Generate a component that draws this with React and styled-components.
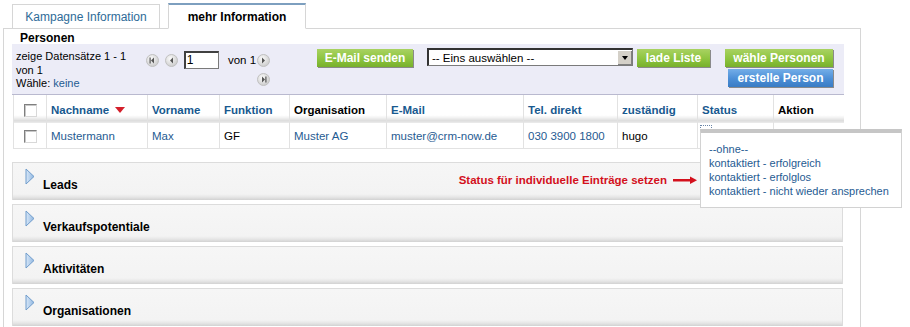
import React from "react";
import styled, { createGlobalStyle } from "styled-components";

const GlobalStyle = createGlobalStyle`
  body {
    margin: 0;
    background: #fff;
    font-family: "Liberation Sans", Arial, sans-serif;
    font-size: 11px;
    color: #000;
  }
`;

const LINK = "#1f5b92";

const Page = styled.div`
  width: 910px;
  height: 327px;
  overflow: hidden;
  padding-top: 3px;
  box-sizing: border-box;
`;

const TabBar = styled.div`
  display: flex;
  align-items: flex-end;
  gap: 8px;
  margin-left: 12px;
  height: 25px;
  position: relative;
  z-index: 1;
`;

const Tab = styled.div`
  box-sizing: border-box;
  width: ${(p) => (p.$active ? "138px" : "148px")};
  height: ${(p) => (p.$active ? "26px" : "24px")};
  margin-bottom: ${(p) => (p.$active ? "-1px" : "0")};
  display: flex;
  align-items: center;
  justify-content: center;
  background: #fff;
  border: 1px solid #d6d6d6;
  border-bottom: ${(p) => (p.$active ? "1px solid #fff" : "none")};
  border-top: ${(p) => (p.$active ? "2px solid #7d9fbf" : "1px solid #d6d6d6")};
  color: ${(p) => (p.$active ? "#000" : "#2e6b98")};
  font-weight: ${(p) => (p.$active ? "bold" : "normal")};
  font-size: 12px;
`;

const Panel = styled.div`
  margin-left: 3px;
  width: 858px;
  box-sizing: border-box;
  border: 1px solid #d6d6d6;
  border-bottom: none;
  padding: 0 16px 40px 8px;
  position: relative;
`;

const Heading = styled.div`
  font-weight: bold;
  font-size: 12px;
  padding: 3px 0 0 8px;
  height: 12px;
  line-height: 12px;
`;

const Toolbar = styled.div`
  display: flex;
  align-items: flex-start;
  background: #ececf7;
  border-bottom: 1px solid #b9b9cf;
  padding: 4px 10px 0 4px;
  box-sizing: border-box;
  height: 51px;
`;

const Info = styled.div`
  width: 130px;
  line-height: 13.5px;
  margin-top: 2px;
`;

const Link = styled.span`
  color: ${LINK};
`;

const Pager = styled.div`
  width: 124px;
  display: flex;
  flex-direction: column;
  align-items: flex-end;
  gap: 4px;
  margin-top: 3px;
`;

const PagerRow = styled.div`
  display: flex;
  align-items: center;
  width: 100%;
`;

const PageInput = styled.div`
  width: 36px;
  height: 18px;
  box-sizing: border-box;
  border: 1px solid #7a7a7a;
  border-top: 2px solid #404040;
  border-left: 2px solid #404040;
  background: #fff;
  font-size: 12px;
  line-height: 15px;
  padding-left: 1px;
  margin: 0 9px 0 6px;
`;

const PagerText = styled.span`
  font-size: 11.5px;
  width: 30px;
`;

const Spacer = styled.span`
  width: 6px;
`;

const CircleIcon = ({ dir, end }) => (
  <svg width="13" height="13" viewBox="0 0 13 13" style={{ flex: "none" }}>
    <defs>
      <radialGradient id="cg" cx="40%" cy="35%" r="70%">
        <stop offset="0" stopColor="#fbfbfb" />
        <stop offset="1" stopColor="#c9c9c9" />
      </radialGradient>
    </defs>
    <circle cx="6.5" cy="6.5" r="6" fill="url(#cg)" stroke="#c0c0c0" />
    {dir === "left" ? (
      <>
        <polygon points="8,3.5 8,9.5 5,6.5" fill="#555" />
        {end && <rect x="3.5" y="3.5" width="1.2" height="6" fill="#555" />}
      </>
    ) : (
      <>
        <polygon points="5,3.5 5,9.5 8,6.5" fill="#555" />
        {end && <rect x="8.3" y="3.5" width="1.2" height="6" fill="#555" />}
      </>
    )}
  </svg>
);

const Button = styled.div`
  box-sizing: border-box;
  height: 18px;
  width: ${(p) => p.$w}px;
  margin-left: ${(p) => p.$ml || 0}px;
  margin-top: ${(p) => (p.$mt === undefined ? 1 : p.$mt)}px;
  display: flex;
  align-items: center;
  justify-content: center;
  color: #fff;
  font-weight: bold;
  font-size: 12px;
  flex: none;
  background: ${(p) =>
    p.$blue
      ? "linear-gradient(to bottom, #74aee8 0%, #4b8ed6 55%, #3a7cc4 100%)"
      : "linear-gradient(to bottom, #a9d262 0%, #8dc43f 55%, #78b02c 100%)"};
  box-shadow: 1px 1px 0 #8a8a8a;
`;

const Select = styled.div`
  box-sizing: border-box;
  width: 206px;
  height: 18px;
  margin-left: 14px;
  border: 1px solid #7a7a7a;
  border-top: 2px solid #333;
  border-left: 2px solid #333;
  background: #fff;
  display: flex;
  align-items: center;
  justify-content: space-between;
  font-size: 11.5px;
  padding-left: 3px;
  flex: none;
`;

const SelectArrow = styled.div`
  width: 14px;
  height: 14px;
  background: #d4d0c8;
  border-left: 1px solid #fff;
  box-shadow: inset -1px -1px 0 #808080;
  display: flex;
  align-items: center;
  justify-content: center;
  &::after {
    content: "";
    border-left: 3.5px solid transparent;
    border-right: 3.5px solid transparent;
    border-top: 4px solid #000;
  }
`;

const ButtonStack = styled.div`
  display: flex;
  flex-direction: column;
  align-items: flex-end;
  gap: 2px;
  margin-left: 15px;
  width: 108px;
`;

const Table = styled.table`
  border-collapse: collapse;
  width: 830px;
  margin-left: 1px;
  table-layout: fixed;
  border-left: 1px solid #e2e2e2;
`;

const Th = styled.th`
  height: 28px;
  padding: 2px 0 0 4px;
  text-align: left;
  font-size: 11.5px;
  font-weight: bold;
  color: ${(p) => (p.$plain ? "#000" : "#18598f")};
  border-left: 1px solid #e2e2e2;
  background: linear-gradient(to bottom, #fff 0%, #fff 72%, #f0f0f0 82%, #dcdcdc 92%, #ededed 100%);
  box-sizing: border-box;
  vertical-align: middle;
`;

const Td = styled.td`
  height: 24px;
  padding: 1px 0 0 4px;
  color: ${(p) => (p.$plain ? "#000" : LINK)};
  border-left: 1px solid #e2e2e2;
  border-bottom: 1px solid #e2e2e2;
  position: relative;
  font-size: 11.5px;
`;

const CheckCell = styled.div`
  display: flex;
  justify-content: center;
  margin-left: -4px;
`;

const Checkbox = styled.div`
  width: 13px;
  height: 13px;
  box-sizing: border-box;
  border: 1px solid #7f7f7f;
  border-right-color: #d8d8d8;
  border-bottom-color: #d8d8d8;
  background: #fff;
  box-shadow: inset 1px 1px 0 #c8c8c8;
`;

const SortArrow = styled.span`
  display: inline-block;
  margin-left: 6px;
  vertical-align: 1px;
  border-left: 5px solid transparent;
  border-right: 5px solid transparent;
  border-top: 6px solid #d41f2a;
`;

const FocusMark = styled.div`
  position: absolute;
  left: 2px;
  top: 2px;
  width: 10px;
  height: 3px;
  border: 1px dotted #6a86a8;
`;

const Popup = styled.div`
  position: absolute;
  left: 2px;
  top: 6px;
  width: 202px;
  height: 79px;
  box-sizing: border-box;
  background: #fff;
  border: 1px solid #d2d2d2;
  border-top: 4px solid #c6c6c6;
  padding: 9px 0 0 8px;
  z-index: 5;
`;

const PopupItem = styled.div`
  color: ${LINK};
  font-size: 11px;
  line-height: 14px;
  white-space: nowrap;
`;

const Blocks = styled.div`
  display: flex;
  flex-direction: column;
  gap: 4px;
  margin-top: 13px;
`;

const Block = styled.div`
  box-sizing: border-box;
  height: 38px;
  width: 831px;
  border: 1px solid #dcdcdc;
  border-bottom: none;
  background: linear-gradient(to bottom, #f6f6f6 0%, #f3f3f3 84%, #e6e6e6 92%, #d2d2d2 100%);
  display: flex;
  align-items: flex-start;
  padding-left: 12px;
`;

const BlockIcon = styled.svg`
  margin-top: 5px;
  flex: none;
`;

const BlockTitle = styled.div`
  font-weight: bold;
  font-size: 12px;
  margin: 15px 0 0 8px;
`;

const Note = styled.div`
  margin-left: auto;
  margin-right: 145px;
  margin-top: 11px;
  display: flex;
  align-items: center;
  gap: 6px;
  color: #d3101c;
  font-weight: bold;
  font-size: 11.5px;
`;

const Triangle = () => (
  <BlockIcon width="10" height="17" viewBox="0 0 10 17">
    <defs>
      <linearGradient id="tg" x1="0" x2="1" y1="0" y2="0">
        <stop offset="0" stopColor="#d9e8f8" />
        <stop offset="1" stopColor="#8fb6e0" />
      </linearGradient>
    </defs>
    <polygon points="1,1 9,8.5 1,16" fill="url(#tg)" stroke="#6f9ccc" strokeWidth="1" />
  </BlockIcon>
);

const RedArrow = () => (
  <svg width="24" height="8" viewBox="0 0 24 8">
    <rect x="0" y="3" width="18" height="2.5" fill="#d3101c" />
    <polygon points="17,0.5 24,4.2 17,8" fill="#d3101c" />
  </svg>
);

const columns = [
  { w: 33 },
  { w: 101, label: "Nachname", sort: true },
  { w: 72, label: "Vorname" },
  { w: 70, label: "Funktion" },
  { w: 97, label: "Organisation", plain: true },
  { w: 137, label: "E-Mail" },
  { w: 94, label: "Tel. direkt" },
  { w: 80, label: "zuständig" },
  { w: 76, label: "Status" },
  { w: 70, label: "Aktion", plain: true },
];

const statusOptions = [
  "--ohne--",
  "kontaktiert - erfolgreich",
  "kontaktiert - erfolglos",
  "kontaktiert - nicht wieder ansprechen",
];

const blocks = ["Leads", "Verkaufspotentiale", "Aktivitäten", "Organisationen"];

export default function App() {
  return (
    <Page>
      <GlobalStyle />
      <TabBar>
        <Tab>Kampagne Information</Tab>
        <Tab $active>mehr Information</Tab>
      </TabBar>
      <Panel>
        <Heading>Personen</Heading>
        <Toolbar>
          <Info>
            zeige Datensätze 1 - 1
            <br />
            von 1
            <br />
            Wähle: <Link>keine</Link>
          </Info>
          <Pager>
            <PagerRow>
              <CircleIcon dir="left" end />
              <Spacer />
              <CircleIcon dir="left" />
              <PageInput>1</PageInput>
              <PagerText>von 1</PagerText>
              <CircleIcon dir="right" />
            </PagerRow>
            <CircleIcon dir="right" end />
          </Pager>
          <Button $w={96} $ml={47}>
            E-Mail senden
          </Button>
          <Select>
            -- Eins auswählen --
            <SelectArrow />
          </Select>
          <Button $w={73} $ml={4}>
            lade Liste
          </Button>
          <ButtonStack>
            <Button $w={108} $mt={1}>
              wähle Personen
            </Button>
            <Button $w={105} $mt={0} $blue>
              erstelle Person
            </Button>
          </ButtonStack>
        </Toolbar>
        <Table>
          <colgroup>
            {columns.map((c, i) => (
              <col key={i} style={{ width: c.w }} />
            ))}
          </colgroup>
          <thead>
            <tr>
              {columns.map((c, i) =>
                i === 0 ? (
                  <Th key={i}>
                    <CheckCell>
                      <Checkbox />
                    </CheckCell>
                  </Th>
                ) : (
                  <Th key={i} $plain={c.plain}>
                    {c.label}
                    {c.sort && <SortArrow />}
                  </Th>
                )
              )}
            </tr>
          </thead>
          <tbody>
            <tr>
              <Td>
                <CheckCell>
                  <Checkbox />
                </CheckCell>
              </Td>
              <Td>Mustermann</Td>
              <Td>Max</Td>
              <Td $plain>GF</Td>
              <Td>Muster AG</Td>
              <Td>muster@crm-now.de</Td>
              <Td>030 3900 1800</Td>
              <Td $plain>hugo</Td>
              <Td>
                <FocusMark />
                <Popup>
                  {statusOptions.map((o) => (
                    <PopupItem key={o}>{o}</PopupItem>
                  ))}
                </Popup>
              </Td>
              <Td />
            </tr>
          </tbody>
        </Table>
        <Blocks>
          {blocks.map((b, i) => (
            <Block key={b}>
              <Triangle />
              <BlockTitle>{b}</BlockTitle>
              {i === 0 && (
                <Note>
                  Status für individuelle Einträge setzen
                  <RedArrow />
                </Note>
              )}
            </Block>
          ))}
        </Blocks>
      </Panel>
    </Page>
  );
}
